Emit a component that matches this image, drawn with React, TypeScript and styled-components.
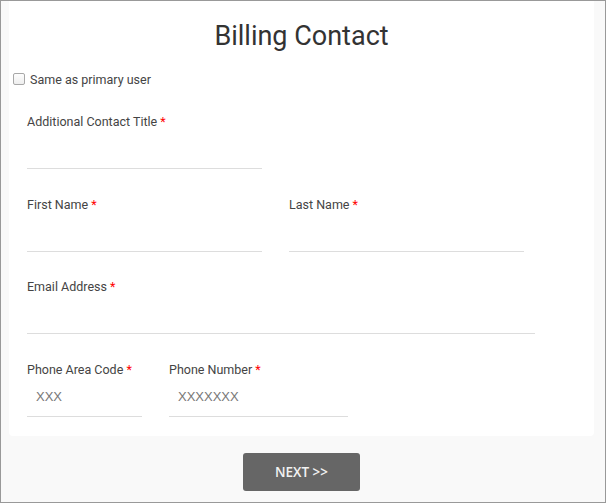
import React from "react";
import styled, { createGlobalStyle } from "styled-components";

const Global = createGlobalStyle`
  html, body { margin: 0; padding: 0; background: #fff; }
  * { box-sizing: border-box; }
`;

const Frame = styled.div`
  width: 606px;
  height: 503px;
  border: 1px solid #999;
  background: #f9f9f9;
  display: flex;
  flex-direction: column;
  font-family: Roboto, "Liberation Sans", sans-serif;
`;

const Card = styled.div`
  background: #fff;
  margin: 0 11px 0 8px;
  padding: 19px 0 19px 0;
  border-radius: 0 0 4px 4px;
`;

const Title = styled.h2`
  margin: 0;
  font-size: 27px;
  line-height: 32px;
  font-weight: 400;
  color: #333;
  text-align: center;
`;

const CheckRow = styled.label`
  display: flex;
  align-items: center;
  margin-top: 18px;
  height: 18px;
  font-size: 12.5px;
  color: #444;
`;

const CheckBox = styled.input`
  appearance: none;
  margin: 0 5px 0 4px;
  width: 12px;
  height: 12px;
  border: 1px solid #a8a8a8;
  border-radius: 2px;
  background: linear-gradient(#fdfdfd, #eee);
`;

const Fields = styled.div`
  padding: 25px 18px 0 18px;
  display: flex;
  flex-direction: column;
  gap: 26.67px;
`;

const Row = styled.div`
  display: flex;
  gap: 27px;
`;

const Group = styled.div<{ $w: number }>`
  width: ${(p) => p.$w}px;
  display: flex;
  flex-direction: column;
`;

const Label = styled.label`
  display: block;
  font-size: 12.5px;
  line-height: 18px;
  color: #444;
  margin-bottom: 4px;
`;

const Star = styled.span`
  color: #f00;
`;

const Input = styled.input`
  height: 34px;
  border: none;
  border-bottom: 1px solid #ddd;
  padding: 0 9px 6px;
  font-family: "Liberation Sans", Arial, sans-serif;
  font-size: 13px;
  color: #555;
  outline: none;
  background: transparent;
  &::placeholder {
    color: #777;
  }
`;

const Footer = styled.div`
  margin: 17px 11px 0 8px;
  display: flex;
  justify-content: center;
`;

const NextButton = styled.button`
  width: 117px;
  height: 38px;
  background: #666;
  color: #f2f2f2;
  border: none;
  border-radius: 3px;
  font-family: "Open Sans", "Liberation Sans", sans-serif;
  font-weight: 600;
  font-size: 13.5px;
  letter-spacing: 0;
  cursor: pointer;
`;

const Field = ({ label, w, placeholder }: { label: string; w: number; placeholder?: string }) => (
  <Group $w={w}>
    <Label>
      {label} <Star>*</Star>
    </Label>
    <Input placeholder={placeholder} />
  </Group>
);

export default function App() {
  return (
    <>
      <Global />
      <Frame>
        <Card>
          <Title>Billing Contact</Title>
          <CheckRow>
            <CheckBox type="checkbox" />
            Same as primary user
          </CheckRow>
          <Fields>
            <Row>
              <Field label="Additional Contact Title" w={235} />
            </Row>
            <Row>
              <Field label="First Name" w={235} />
              <Field label="Last Name" w={235} />
            </Row>
            <Row>
              <Field label="Email Address" w={508} />
            </Row>
            <Row>
              <Field label="Phone Area Code" w={115} placeholder="XXX" />
              <Field label="Phone Number" w={179} placeholder="XXXXXXX" />
            </Row>
          </Fields>
        </Card>
        <Footer>
          <NextButton>NEXT &gt;&gt;</NextButton>
        </Footer>
      </Frame>
    </>
  );
}
